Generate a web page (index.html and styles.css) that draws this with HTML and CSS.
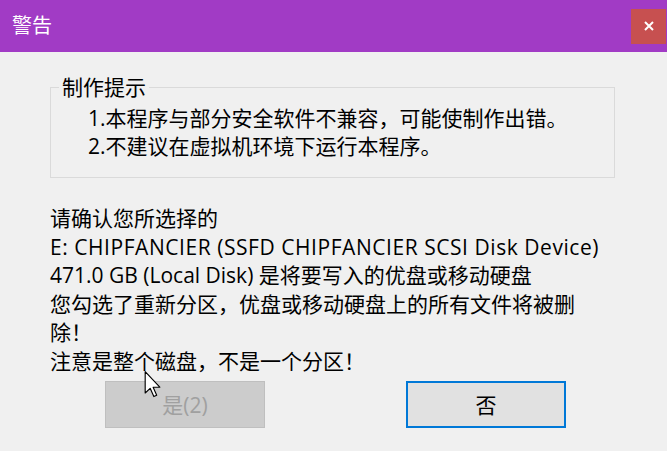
FILE: index.html
```html
<!doctype html>
<html>
<head>
	<meta charset="utf-8">
	<title>警告</title>
	<link rel="stylesheet" href="styles.css">
</head>
<body>

	<div class="titlebar">
		<span class="titletext">警告</span>
		<span class="closebtn">
			<svg width="10" height="10" viewBox="0 0 10 10"><path d="M1 1 L9 9 M9 1 L1 9" stroke="#fff" stroke-width="2" fill="none"/></svg>
		</span>
	</div>

	<div class="content">
		<fieldset class="tipsbox">
			<legend>制作提示</legend>
			<div class="tips">
				1.本程序与部分安全软件不兼容，可能使制作出错。<br>
				2.不建议在虚拟机环境下运行本程序。
			</div>
		</fieldset>

		<div class="message">
			请确认您所选择的<br>
			<span class="devname">E: CHIPFANCIER (SSFD CHIPFANCIER SCSI Disk Device)</span><br>
			471.0 GB (Local Disk) 是将要写入的优盘或移动硬盘<br>
			您勾选了重新分区，优盘或移动硬盘上的所有文件将被删<br>
			除！<br>
			注意是整个磁盘，不是一个分区！
		</div>

		<div class="buttons">
			<button class="btn btn-disabled" disabled>是(2)</button>
			<button class="btn btn-focus">否</button>
		</div>
	</div>

	<!-- mouse pointer over the dialog -->
	<svg class="pointer" width="18" height="27" viewBox="0 0 12 19">
		<path d="M0.5 0.5 L0.5 15.5 L4 12.2 L6.6 18 L8.6 17.1 L6.1 11.4 L10.8 11.4 Z" fill="#fff" stroke="#000" stroke-width="0.8" stroke-linejoin="round"/>
	</svg>

</body>
</html>
```

FILE: styles.css
```css
* {box-sizing:border-box;}
body {margin:0; width:667px; height:451px; position:relative; overflow:hidden; background:#f0f0f0; font:21px "Open Sans","Noto Sans CJK SC",sans-serif; color:#000;}

.titlebar {height:52px; background:#a13bc5; display:flex; align-items:center; justify-content:space-between; padding:0 1px 0 12px;}
.titletext {color:#fff; font-size:20px; line-height:26px;}
.closebtn {width:35px; height:35px; background:#c75050; display:flex; align-items:center; justify-content:center;}
.closebtn svg {display:block;}

.content {padding:0 52px 0 50px;}

.tipsbox {margin:21px 0 0 0; padding:0 0 17px 8px; border:1px solid #dadada; line-height:28px;}
.tipsbox legend {padding:0 3px;}
.tips {padding-left:29px; margin-top:3px;}

.message {margin-top:26px; line-height:28.6px;}
.devname {letter-spacing:0.55px;}

.buttons {display:flex; gap:141px; margin:5px 0 0 55px;}
.btn {width:160px; height:47px; font:21px "Open Sans","Noto Sans CJK SC",sans-serif; padding:0; margin:0;}
.btn-disabled {background:#cccccc; border:1px solid #bfbfbf; color:#a0a0a0;}
.btn-focus {background:#e1e1e1; border:2px solid #0078d7; color:#000;}

.pointer {position:absolute; left:144px; top:371px;}
```
